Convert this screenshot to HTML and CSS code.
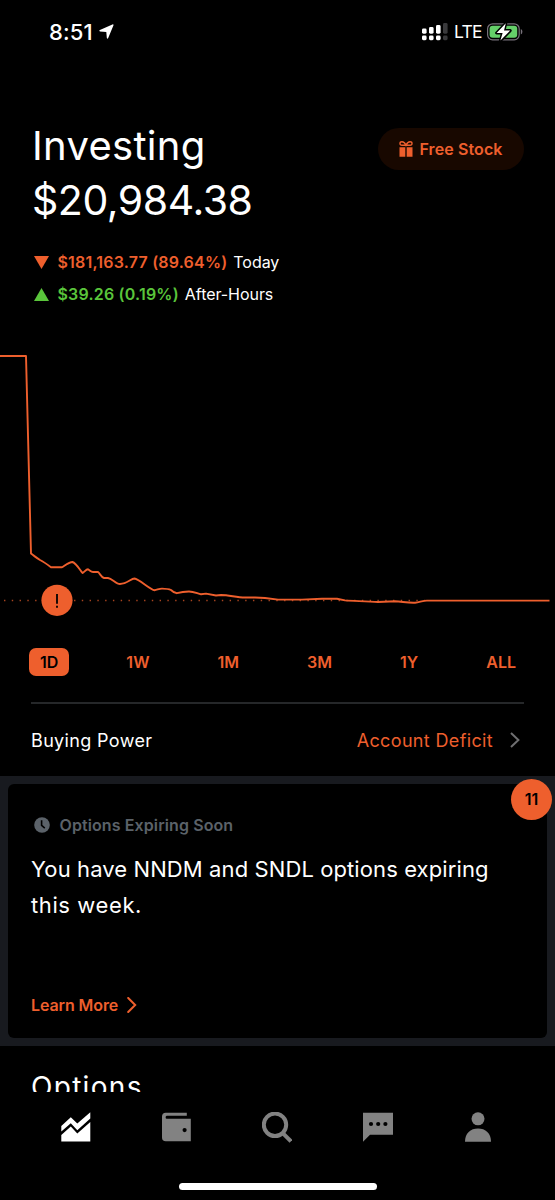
FILE: index.html
```
<!DOCTYPE html>
<html lang="en">
<head>
  <meta charset="UTF-8">
  <meta name="viewport" content="width=device-width, initial-scale=1.0">
  <title>Investing</title>
  <link rel="stylesheet" href="styles.css">
</head>
<body>
  <div class="screen">
    <div class="status-bar">
      <span class="time">8:51</span>
      <svg class="location" width="15" height="15" viewBox="0 0 15 15"><path d="M13.4 0.4 Q14.9 0 14.4 1.5 L9.2 14 Q8.2 15.4 7.8 13.8 L7.3 7.9 L1 7.5 Q-0.5 7 0.9 6 Z" fill="#fff"/></svg>
      <svg class="signal" width="26" height="18" viewBox="0 0 26 18">
        <g fill="#fff">
          <rect x="0" y="5.5" width="4.6" height="5.2" rx="1.4"/>
          <rect x="7" y="4" width="4.6" height="6.7" rx="1.4"/>
          <rect x="14" y="2" width="4.6" height="8.7" rx="1.4"/>
          <rect x="0" y="12.6" width="4.6" height="4.6" rx="1.4"/>
          <rect x="7" y="12.6" width="4.6" height="4.6" rx="1.4"/>
          <rect x="14" y="12.6" width="4.6" height="4.6" rx="1.4"/>
        </g>
        <g fill="#39393b">
          <rect x="21" y="0" width="4.6" height="10.7" rx="1.4"/>
          <rect x="21" y="12.6" width="4.6" height="4.6" rx="1.4"/>
        </g>
      </svg>
      <span class="network">LTE</span>
      <svg class="battery" width="36" height="20" viewBox="0 0 36 20">
        <rect x="0.6" y="1.8" width="31.6" height="16" rx="5" fill="none" stroke="#77717a" stroke-width="1.2"/>
        <rect x="2.6" y="3.8" width="27.6" height="12" rx="3" fill="#65cf69"/>
        <path d="M33.8 7 Q35.4 7.8 35.4 9.8 Q35.4 11.8 33.8 12.6 Z" fill="#77717a"/>
        <path d="M18.8 1.2 L9.6 11 H15.6 L13.4 18.6 L23.2 8.6 H17 Z" fill="#fff" stroke="#000" stroke-width="3" stroke-linejoin="round" paint-order="stroke"/>
      </svg>
    </div>

    <header class="header">
      <div class="title">
        <h1>Investing</h1>
        <div class="amount">$20,984.38</div>
      </div>
      <button class="free-stock">
        <svg width="14" height="16" viewBox="0 0 14 16">
          <path d="M7 4.3 H3 C0.2 4.3 0.4 0.8 3 0.8 C5.5 0.8 6.2 2.6 7 4.3 C7.8 2.6 8.5 0.8 11 0.8 C13.6 0.8 13.8 4.3 11 4.3 Z" fill="none" stroke="#ee5f2d" stroke-width="1.4"/>
          <path d="M0.5 6.2 H6.3 V15.7 H0.5 Z M7.7 6.2 H13.5 V15.7 H7.7 Z" fill="#ee5f2d"/>
        </svg>
        <span>Free Stock</span>
      </button>
    </header>

    <div class="changes">
      <div class="change down">
        <svg width="15" height="13" viewBox="0 0 15 13"><path d="M0 0 H15 L7.5 13 Z" fill="#ee5f2d"/></svg>
        <b>$181,163.77 (89.64%)</b>
        <span>Today</span>
      </div>
      <div class="change up">
        <svg width="15" height="13" viewBox="0 0 15 13"><path d="M0 13 H15 L7.5 0 Z" fill="#5ac53b"/></svg>
        <b>$39.26 (0.19%)</b>
        <span>After-Hours</span>
      </div>
    </div>

    <svg class="chart" width="555" height="338" viewBox="0 310 555 338">
      <path class="baseline" d="M4 600.5 H425"/>
      <path class="price" d="M0 356 H26 L31 553.5 C34 556 37 558 40 560 C44 562 48 565 51 567.3 H62 C65 565.5 69 562 72.5 562 C76 563 80 570 82.5 573 C84 572.5 86 569.3 88 569.3 C90 570.5 91 572 93 572 H98 C100 573.5 101.5 577.5 104 578 H108 C112 578.5 116 584 120 584 C127 584 131 578.5 134.5 578.5 C139 579 150 589.5 154.5 590.2 C157 590 159 588.6 162 588.6 C166 588.6 169 589 171 590 C173 592 175 593.2 177 593.2 C181 592 185 591.5 189 591.5 C194 591.5 198 593.8 201 594.2 L206 593.6 L216 595.5 L221 595 C229 595 236 597.3 245 597.5 H255 L265 598 L278 599.6 H302 L322 598.7 H337 L345 600.4 C354 601 366 601.2 378 602 L395 601.3 C404 602 409 603 415 602.7 C420 602 423 600.6 427 600.6 H549.5"/>
      <circle cx="57" cy="600.3" r="15.6" fill="#ee5f2d"/>
      <path d="M57 594 V603.8 M57 605.7 V607.8" stroke="#1a0a04" stroke-width="2"/>
    </svg>

    <div class="ranges">
      <span class="range active">1D</span>
      <span class="range">1W</span>
      <span class="range">1M</span>
      <span class="range">3M</span>
      <span class="range">1Y</span>
      <span class="range">ALL</span>
    </div>

    <div class="buying-power">
      <span class="label">Buying Power</span>
      <span class="deficit">Account Deficit</span>
      <svg width="10" height="16" viewBox="0 0 10 16"><path d="M1 1 L8.4 8 L1 15" fill="none" stroke="#6f6f71" stroke-width="2"/></svg>
    </div>

    <section class="cards">
      <div class="card">
        <div class="card-title">
          <svg width="16" height="16" viewBox="0 0 16 16">
            <circle cx="8" cy="8" r="7.8" fill="#5b6269"/>
            <path d="M7.6 3.2 V8.4 L10.8 11.2" fill="none" stroke="#000" stroke-width="1.6"/>
          </svg>
          <span>Options Expiring Soon</span>
        </div>
        <p>You have NNDM and SNDL options expiring<br><span class="wide">this week.</span></p>
        <a class="learn-more">
          <span>Learn More</span>
          <svg width="10" height="16" viewBox="0 0 10 16"><path d="M1.2 1 L8.2 8 L1.2 15" fill="none" stroke="#ee5f2d" stroke-width="2" stroke-linecap="round"/></svg>
        </a>
      </div>
      <div class="badge">11</div>
    </section>

    <div class="list">
      <h2>Options</h2>
    </div>

    <nav class="tabs">
      <svg width="30" height="30" viewBox="0 0 30 30" fill="#fff">
        <path d="M0.3 14 L9.8 5.2 L16.3 11.5 L29.3 0.3 V6.5 L16.3 18.3 L9.8 11.3 L0.3 19.5 Z"/>
        <path d="M0.3 23 L9.8 14.6 L16.3 21.6 L29.3 10 V29.5 H0.3 Z"/>
      </svg>
      <svg width="30" height="30" viewBox="0 0 30 30" fill="#828282">
        <path fill-rule="evenodd" d="M3.8 0.8 H24.8 V3.8 H4.8 Q3.6 3.8 3.6 5.3 Q3.6 6.8 4.8 6.8 H28.8 V29.3 H3.8 Q0 29.3 0 25.5 V4.6 Q0 0.8 3.8 0.8 Z M22.6 16 A2.1 2.1 0 1 0 22.6 20.2 A2.1 2.1 0 1 0 22.6 16 Z"/>
      </svg>
      <svg width="30" height="31" viewBox="0 0 30 31" fill="none" stroke="#828282">
        <circle cx="13" cy="12.8" r="11.2" stroke-width="4"/>
        <path d="M20.5 20.8 L29 29.3" stroke-width="4"/>
      </svg>
      <svg width="30" height="30" viewBox="0 0 30 30">
        <path d="M0 0.8 H30 V22.8 H7 L0 29.7 Z" fill="#828282"/>
        <circle cx="8" cy="12" r="2.1"/>
        <circle cx="15.2" cy="12" r="2.1"/>
        <circle cx="22.4" cy="12" r="2.1"/>
      </svg>
      <svg width="30" height="30" viewBox="0 0 30 30" fill="#828282">
        <circle cx="15" cy="6.8" r="6.5"/>
        <path d="M2 29.8 C2 21 7.5 16.4 15 16.4 C22.5 16.4 28 21 28 29.8 Z"/>
      </svg>
    </nav>
    <div class="home-indicator"></div>
  </div>
</body>
</html>
```

FILE: styles.css
```
* {
  box-sizing: border-box;
}
body {
  margin: 0;
  background: #000;
  color: #fff;
  font-family: Inter, "Liberation Sans", sans-serif;
}
h1, h2, p {
  margin: 0;
  font-weight: 400;
}
svg {
  display: block;
  flex: none;
}
.screen {
  width: 555px;
  height: 1200px;
  overflow: hidden;
  display: flex;
  flex-direction: column;
}
.status-bar {
  height: 118px;
  flex: none;
  display: flex;
  align-items: flex-start;
  padding: 22px 32px 0 49px;
  line-height: 20px;
}
.time {
  font-size: 22px;
  font-weight: 500;
  letter-spacing: 0.1px;
  width: 50px;
}
.location {
  margin-top: 2px;
}
.signal {
  margin: 1px 6px 0 auto;
}
.network {
  font-size: 17.5px;
  letter-spacing: -0.8px;
  width: 33px;
}
.header {
  display: flex;
  justify-content: space-between;
  align-items: flex-start;
  height: 128px;
  flex: none;
  padding: 0 31px 0 32px;
}
.title {
  font-size: 41px;
  line-height: 55px;
}
.title h1 {
  font-size: 40px;
  letter-spacing: 0.3px;
}
.amount {
  letter-spacing: -0.45px;
}
.free-stock {
  display: flex;
  align-items: center;
  justify-content: center;
  gap: 6px;
  width: 146px;
  height: 42px;
  margin-top: 10px;
  padding: 0;
  border: none;
  border-radius: 21px;
  background: #180800;
  color: #ee5f2d;
  font-family: inherit;
  font-size: 16px;
  font-weight: 600;
  letter-spacing: 0.1px;
}
.changes {
  height: 64px;
  flex: none;
  padding-left: 34px;
}
.change {
  display: flex;
  align-items: center;
  height: 32px;
  font-size: 16px;
}
.change b {
  font-weight: 600;
  letter-spacing: 0.2px;
  margin: 0 6px 0 8.5px;
}
.down b {
  color: #ee5f2d;
}
.up b {
  color: #5ac53b;
}
.change span {
  letter-spacing: -0.05px;
}
.chart {
  height: 338px;
}
.baseline {
  stroke: #a8441f;
  stroke-width: 1.4;
  stroke-dasharray: 1.4 6.38;
}
.price {
  fill: none;
  stroke: #ee5f2d;
  stroke-width: 1.9;
  stroke-linejoin: round;
}
.ranges {
  display: flex;
  justify-content: space-between;
  height: 54px;
  flex: none;
  margin: 0 31px;
  padding: 0 8px 0 9px;
  color: #ee5f2d;
  font-size: 16px;
  font-weight: 600;
  line-height: 28px;
}
.active {
  height: 28px;
  margin-left: -11px;
  margin-right: -11px;
  padding: 0 11px;
  border-radius: 7px;
  background: #ee5f2d;
  color: #000;
}
.buying-power {
  display: flex;
  align-items: center;
  height: 74px;
  flex: none;
  margin: 0 31px;
  padding-right: 4px;
  border-top: 2px solid #252729;
  font-size: 18px;
  letter-spacing: 0.35px;
}
.deficit {
  margin-left: auto;
  margin-right: 17px;
  color: #ee5f2d;
}
.cards {
  position: relative;
  height: 270px;
  flex: none;
  padding: 8px;
  background: #181a1f;
}
.card {
  display: flex;
  flex-direction: column;
  height: 254px;
  padding: 31px 23px 23px;
  border-radius: 6px;
  background: #000;
}
.card-title {
  display: flex;
  align-items: center;
  gap: 10px;
  height: 20px;
  padding-left: 2.5px;
  color: #5b6269;
  font-size: 16px;
  font-weight: 600;
  letter-spacing: 0.1px;
}
.card p {
  margin-top: 16px;
  font-size: 22px;
  line-height: 36px;
  letter-spacing: 0.1px;
  white-space: nowrap;
}
.wide {
  letter-spacing: 0.6px;
}
.learn-more {
  display: flex;
  align-items: center;
  gap: 9px;
  height: 20px;
  margin-top: auto;
  color: #ee5f2d;
  font-size: 16px;
  font-weight: 600;
  letter-spacing: -0.1px;
}
.badge {
  position: absolute;
  top: 3px;
  right: 3px;
  width: 41px;
  height: 41px;
  border-radius: 50%;
  background: #ee5f2d;
  color: #000;
  font-size: 16px;
  font-weight: 600;
  line-height: 41px;
  text-align: center;
}
.list {
  height: 46px;
  flex: none;
  overflow: hidden;
  padding: 23px 31px 0;
}
.list h2 {
  font-size: 28px;
  line-height: 36px;
  letter-spacing: 1.3px;
}
.tabs {
  display: flex;
  justify-content: space-between;
  height: 91px;
  flex: none;
  padding: 20px 62px 0 61px;
}
.home-indicator {
  width: 198px;
  height: 7px;
  flex: none;
  margin: 0 auto;
  border-radius: 4px;
  background: #fff;
}
```
